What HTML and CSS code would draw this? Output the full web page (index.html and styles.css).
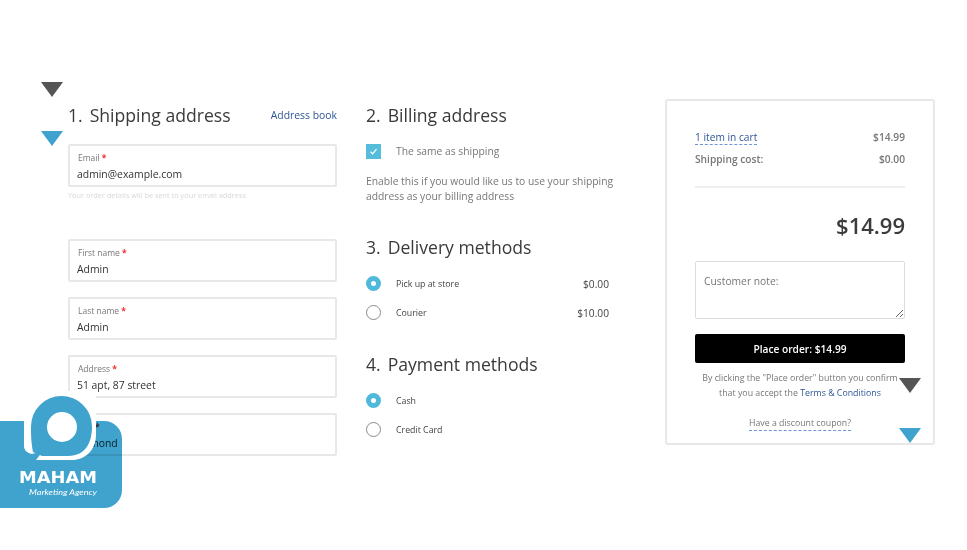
FILE: index.html
```html
<!DOCTYPE html>
<html lang="en">
<head>
  <meta charset="UTF-8" />
  <title>Checkout</title>
  <link rel="stylesheet" href="styles.css">
</head>
<body>

  <div class="checkout">

    <section class="col-shipping">
      <div class="title-row">
        <h2><span class="num">1.</span>Shipping address</h2>
        <a class="link" href="#">Address book</a>
      </div>
      <label class="field">
        <span class="field-label">Email <b>*</b></span>
        <input type="text" value="admin@example.com" />
      </label>
      <p class="help">Your order details will be sent to your email address</p>
      <label class="field">
        <span class="field-label">First name <b>*</b></span>
        <input type="text" value="Admin" />
      </label>
      <label class="field">
        <span class="field-label">Last name <b>*</b></span>
        <input type="text" value="Admin" />
      </label>
      <label class="field">
        <span class="field-label">Address <b>*</b></span>
        <input type="text" value="51 apt, 87 street" />
      </label>
      <label class="field">
        <span class="field-label">City <b>*</b></span>
        <input type="text" value="Edmond" />
      </label>
    </section>

    <section class="col-methods">
      <h2><span class="num">2.</span>Billing address</h2>
      <div class="check-row">
        <span class="checkbox">
          <svg width="9" height="9" viewBox="0 0 9 9"><path d="M1.5 4.8 3.6 6.8 7.5 2.2" fill="none" stroke="#fff" stroke-width="1.3"/></svg>
        </span>
        <span>The same as shipping</span>
      </div>
      <p class="hint">Enable this if you would like us to use your shipping address as your billing address</p>

      <h2 class="next"><span class="num">3.</span>Delivery methods</h2>
      <div class="option">
        <span class="radio on"></span><span class="option-name">Pick up at store</span><span class="option-price">$0.00</span>
      </div>
      <div class="option">
        <span class="radio"></span><span class="option-name">Courier</span><span class="option-price">$10.00</span>
      </div>

      <h2 class="next"><span class="num">4.</span>Payment methods</h2>
      <div class="option">
        <span class="radio on"></span><span class="option-name">Cash</span>
      </div>
      <div class="option">
        <span class="radio"></span><span class="option-name">Credit Card</span>
      </div>
    </section>

    <aside class="summary">
      <div class="summary-row">
        <a class="link dashed" href="#">1 item in cart</a><span class="cost">$14.99</span>
      </div>
      <div class="summary-row">
        <span class="cost">Shipping cost:</span><span class="cost">$0.00</span>
      </div>
      <hr />
      <div class="total">$14.99</div>
      <textarea class="note" placeholder="Customer note:"></textarea>
      <button class="place-order">Place order: $14.99</button>
      <p class="terms">By clicking the "Place order" button you confirm that you accept the <a class="link" href="#">Terms &amp; Conditions</a></p>
      <div class="coupon"><a href="#">Have a discount coupon?</a></div>
    </aside>

  </div>

  <!-- markers over the screenshot -->
  <span class="marker dark m1"></span>
  <span class="marker blue m2"></span>
  <span class="marker dark m3"></span>
  <span class="marker blue m4"></span>

  <!-- agency watermark -->
  <div class="logo-plate"></div>
  <svg class="logo" width="122" height="125" viewBox="0 0 122 125">
    <path d="M24 1H96V45C96 60 85 70 72 70H36L43 61 32 64C27 63 24 60 24 56Z" fill="#fff"/>
    <path d="M61.5 6A30.5 30.5 0 0 1 92 36.5C92 52 86 66 68 66H42L33 62C31 52 31 45 31 36.5A30.5 30.5 0 0 1 61.5 6Z" fill="#3fa3cd"/>
    <circle cx="62" cy="37" r="15" fill="#fff"/>
    <text x="19" y="93" class="logo-name" textLength="78" lengthAdjust="spacingAndGlyphs">MAHAM</text>
    <text x="29" y="105" class="logo-tag" textLength="68" lengthAdjust="spacingAndGlyphs">Marketing Agency</text>
  </svg>

</body>
</html>
```

FILE: styles.css
```css
body {
  margin: 0;
  background: #fff;
  font-family: "Open Sans", Arial, sans-serif;
  color: #3b3b3b;
}
.checkout {
  display: flex;
  align-items: flex-start;
  padding: 99px 0 0 68px;
}
h2 {
  margin: 0;
  font-size: 17.6px;
  font-weight: 400;
  line-height: 32px;
  color: #3a3a3a;
}
.num {
  margin-right: 7px;
}
.link {
  color: #2f5597;
  text-decoration: none;
}

/* column 1 */
.col-shipping {
  width: 269px;
  margin-right: 29px;
}
.title-row {
  display: flex;
  justify-content: space-between;
  align-items: center;
  margin-bottom: 13px;
}
.title-row .link {
  font-size: 10.4px;
}
.field {
  display: block;
  box-sizing: border-box;
  height: 43px;
  margin-bottom: 15px;
  padding: 6px 8px 0 7px;
  border: 2px solid #e8e8e8;
  border-radius: 2px;
}
.field-label {
  display: block;
  margin-bottom: 2px;
  padding-left: 1px;
  font-size: 8.5px;
  line-height: 12px;
  color: #777;
}
.field-label b {
  color: #e33;
}
.field input {
  display: block;
  width: 100%;
  padding: 0;
  border: none;
  outline: none;
  background: transparent;
  font-family: inherit;
  font-size: 10.4px;
  line-height: 16px;
  color: #333;
}
.help {
  margin: -13px 0 0;
  height: 50px;
  font-size: 7.35px;
  line-height: 12px;
  color: #d8d8d8;
}

/* column 2 */
.col-methods {
  width: 250px;
  margin-right: 49px;
}
.check-row {
  display: flex;
  align-items: center;
  margin-top: 13px;
  font-size: 10.3px;
  line-height: 15px;
  color: #777;
}
.checkbox {
  display: flex;
  align-items: center;
  justify-content: center;
  width: 15px;
  height: 15px;
  margin-right: 15px;
  background: #56bcdc;
}
.hint {
  margin: 15px 0 0;
  font-size: 10.3px;
  line-height: 15px;
  color: #777;
}
.next {
  margin-top: 27px;
}
.hint + .next {
  margin-top: 27px;
}
.option + .next {
  margin-top: 28px;
}
h2 + .option {
  margin-top: 13px;
}
.option {
  display: flex;
  align-items: center;
  width: 243px;
  height: 15px;
  margin-top: 14px;
  font-size: 8.8px;
  color: #444;
}
.radio {
  box-sizing: border-box;
  flex: none;
  width: 15px;
  height: 15px;
  margin-right: 15px;
  border: 1px solid #8a8a8a;
  border-radius: 50%;
}
.radio.on {
  border: 5px solid #4fb9dc;
  background: #fff;
}
.option-name {
  flex: 1;
}
.option-price {
  font-size: 10.2px;
}

/* order summary */
.summary {
  box-sizing: border-box;
  width: 270px;
  height: 346px;
  padding: 25px 28px 0;
  border: 2px solid #e8e8e8;
  border-radius: 3px;
}
.summary-row {
  display: flex;
  justify-content: space-between;
  align-items: center;
  height: 22px;
  font-size: 10.2px;
}
.cost {
  font-weight: 600;
  color: #777;
}
.dashed {
  margin-top: 1px;
  border-bottom: 1px dashed #6f95d6;
  line-height: 13px;
}
.summary hr {
  height: 2px;
  margin: 16px 0 0;
  border: none;
  background: #efefef;
}
.total {
  margin-top: 20px;
  font-size: 22px;
  font-weight: 600;
  line-height: 34px;
  text-align: right;
  color: #3c3c3c;
}
.note {
  display: block;
  box-sizing: border-box;
  width: 100%;
  height: 58px;
  margin-top: 19px;
  padding: 12px 8px;
  border: 1px solid #dcdcdc;
  border-radius: 2px;
  outline: none;
  resize: vertical;
  font-family: inherit;
  font-size: 10.3px;
  line-height: 15px;
}
.note::placeholder {
  color: #777;
  opacity: 1;
}
.place-order {
  display: block;
  width: 100%;
  height: 29px;
  margin-top: 15px;
  padding: 0;
  border: none;
  border-radius: 2px;
  background: #000;
  color: #fff;
  font-family: inherit;
  font-size: 10.2px;
  font-weight: 600;
}
.terms {
  margin: 8px 0 0;
  font-size: 8.8px;
  line-height: 14.5px;
  text-align: center;
  color: #777;
}
.coupon {
  margin-top: 17px;
  font-size: 8.75px;
  line-height: 13px;
  text-align: center;
}
.coupon a {
  display: inline-block;
  border-bottom: 1px dashed #6f95d6;
  color: #777;
  text-decoration: none;
}

/* overlay markers */
.marker {
  position: absolute;
  width: 0;
  height: 0;
  border-left: 11px solid transparent;
  border-right: 11px solid transparent;
  border-top: 15px solid #555;
}
.marker.blue {
  border-top-color: #3fa3cd;
}
.m1 { left: 41px; top: 82px; }
.m2 { left: 41px; top: 131px; }
.m3 { left: 899px; top: 378px; }
.m4 { left: 899px; top: 428px; }

/* watermark */
.logo-plate {
  position: absolute;
  left: 0;
  top: 421px;
  width: 122px;
  height: 87px;
  border-radius: 0 18px 18px 0;
  background: #3fa3cd;
  mix-blend-mode: multiply;
}
.logo {
  position: absolute;
  left: 0;
  top: 390px;
}
.logo-name {
  font-family: "DejaVu Sans", sans-serif;
  font-size: 15px;
  font-weight: 700;
  fill: #fff;
}
.logo-tag {
  font-family: "Lato", sans-serif;
  font-size: 8.5px;
  font-style: italic;
  fill: #fff;
}
```
